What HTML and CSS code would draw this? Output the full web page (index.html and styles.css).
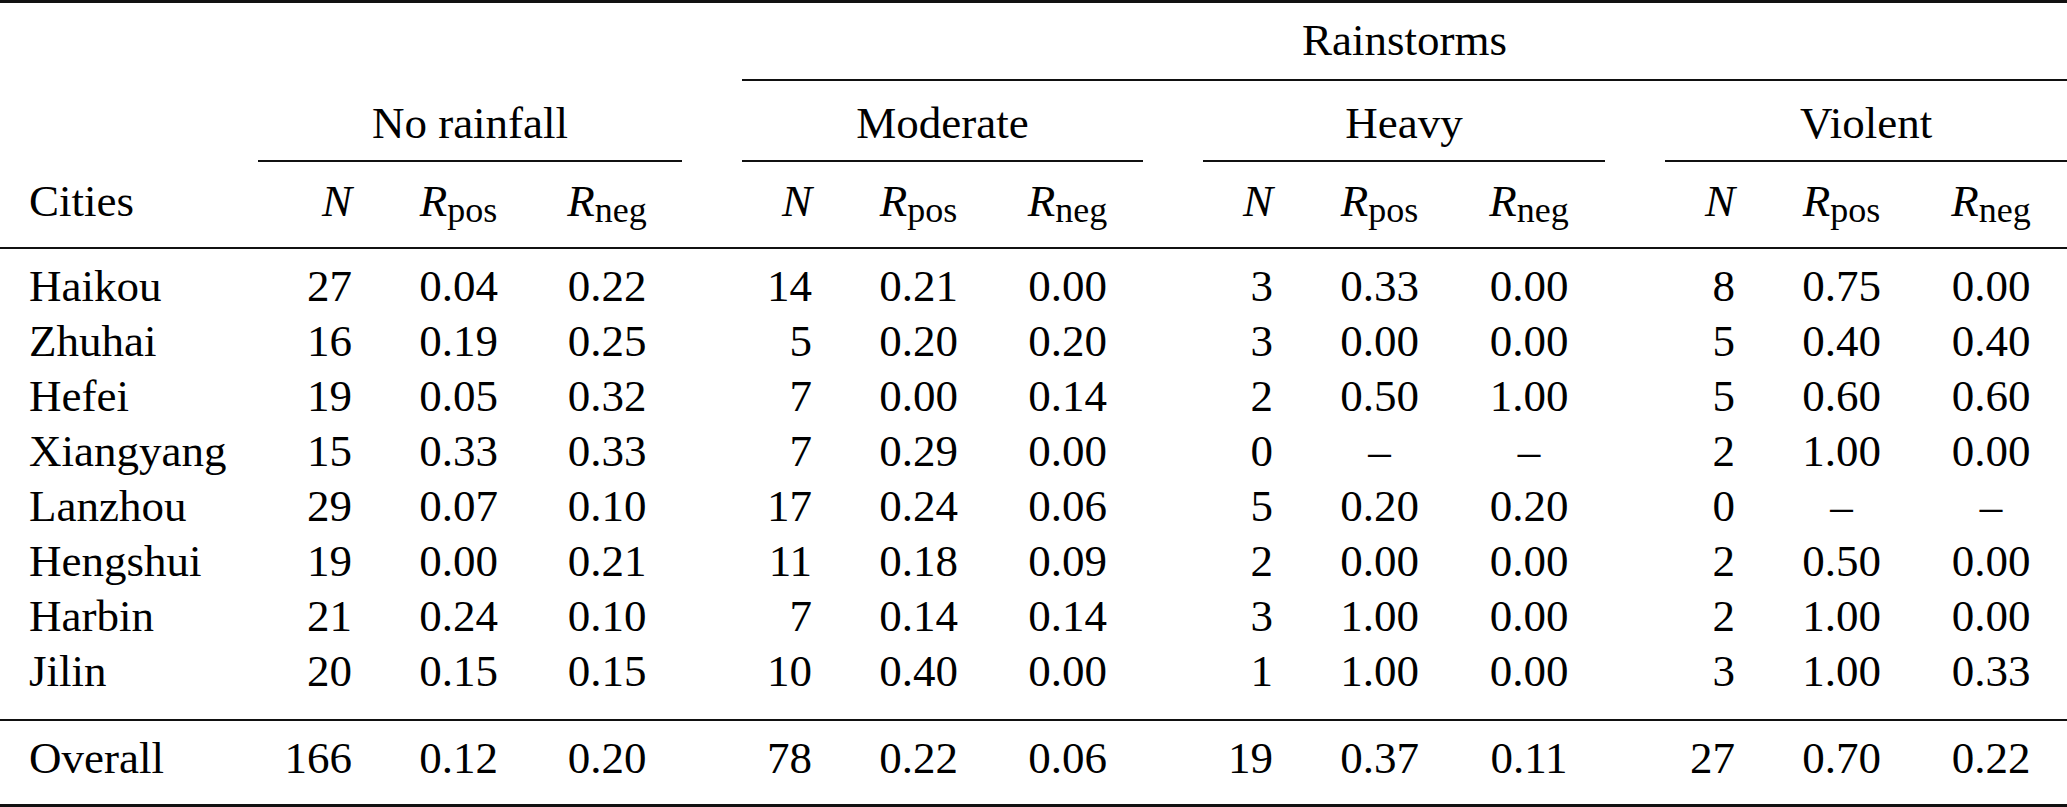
FILE: index.html
```html
<!DOCTYPE html>
<html lang="en">
<head>
<meta charset="utf-8">
<title>Rainstorms table</title>
<link rel="stylesheet" href="styles.css">
</head>
<body>
<table class="tbl">
  <colgroup>
    <col class="c-city">
    <col class="c-n1"><col class="c-r"><col class="c-rl1">
    <col class="c-gap">
    <col class="c-n"><col class="c-r"><col class="c-rl2">
    <col class="c-gap">
    <col class="c-n"><col class="c-r"><col class="c-rl3">
    <col class="c-gap">
    <col class="c-n"><col class="c-r"><col class="c-rl3">
  </colgroup>
  <thead>
    <tr class="r-h1">
      <th></th>
      <th colspan="3"></th>
      <th></th>
      <th colspan="11" class="span-rule">Rainstorms</th>
    </tr>
    <tr class="r-h2">
      <th></th>
      <th colspan="3" class="span-rule">No rainfall</th>
      <th></th>
      <th colspan="3" class="span-rule">Moderate</th>
      <th></th>
      <th colspan="3" class="span-rule">Heavy</th>
      <th></th>
      <th colspan="3" class="span-rule">Violent</th>
    </tr>
    <tr class="r-h3">
      <th class="city">Cities</th>
      <th class="n"><i>N</i></th><th class="r"><i>R</i><sub class="sb">pos</sub></th><th class="r"><i>R</i><sub class="sb">neg</sub></th>
      <th></th>
      <th class="n"><i>N</i></th><th class="r"><i>R</i><sub class="sb">pos</sub></th><th class="r"><i>R</i><sub class="sb">neg</sub></th>
      <th></th>
      <th class="n"><i>N</i></th><th class="r"><i>R</i><sub class="sb">pos</sub></th><th class="r"><i>R</i><sub class="sb">neg</sub></th>
      <th></th>
      <th class="n"><i>N</i></th><th class="r"><i>R</i><sub class="sb">pos</sub></th><th class="r"><i>R</i><sub class="sb">neg</sub></th>
    </tr>
  </thead>
  <tbody>
    <tr class="r-first">
      <td class="city">Haikou</td>
      <td class="n">27</td><td class="r">0.04</td><td class="r">0.22</td><td></td>
      <td class="n">14</td><td class="r">0.21</td><td class="r">0.00</td><td></td>
      <td class="n">3</td><td class="r">0.33</td><td class="r">0.00</td><td></td>
      <td class="n">8</td><td class="r">0.75</td><td class="r">0.00</td>
    </tr>
    <tr>
      <td class="city">Zhuhai</td>
      <td class="n">16</td><td class="r">0.19</td><td class="r">0.25</td><td></td>
      <td class="n">5</td><td class="r">0.20</td><td class="r">0.20</td><td></td>
      <td class="n">3</td><td class="r">0.00</td><td class="r">0.00</td><td></td>
      <td class="n">5</td><td class="r">0.40</td><td class="r">0.40</td>
    </tr>
    <tr>
      <td class="city">Hefei</td>
      <td class="n">19</td><td class="r">0.05</td><td class="r">0.32</td><td></td>
      <td class="n">7</td><td class="r">0.00</td><td class="r">0.14</td><td></td>
      <td class="n">2</td><td class="r">0.50</td><td class="r">1.00</td><td></td>
      <td class="n">5</td><td class="r">0.60</td><td class="r">0.60</td>
    </tr>
    <tr>
      <td class="city">Xiangyang</td>
      <td class="n">15</td><td class="r">0.33</td><td class="r">0.33</td><td></td>
      <td class="n">7</td><td class="r">0.29</td><td class="r">0.00</td><td></td>
      <td class="n">0</td><td class="r">–</td><td class="r">–</td><td></td>
      <td class="n">2</td><td class="r">1.00</td><td class="r">0.00</td>
    </tr>
    <tr>
      <td class="city">Lanzhou</td>
      <td class="n">29</td><td class="r">0.07</td><td class="r">0.10</td><td></td>
      <td class="n">17</td><td class="r">0.24</td><td class="r">0.06</td><td></td>
      <td class="n">5</td><td class="r">0.20</td><td class="r">0.20</td><td></td>
      <td class="n">0</td><td class="r">–</td><td class="r">–</td>
    </tr>
    <tr>
      <td class="city">Hengshui</td>
      <td class="n">19</td><td class="r">0.00</td><td class="r">0.21</td><td></td>
      <td class="n">11</td><td class="r">0.18</td><td class="r">0.09</td><td></td>
      <td class="n">2</td><td class="r">0.00</td><td class="r">0.00</td><td></td>
      <td class="n">2</td><td class="r">0.50</td><td class="r">0.00</td>
    </tr>
    <tr>
      <td class="city">Harbin</td>
      <td class="n">21</td><td class="r">0.24</td><td class="r">0.10</td><td></td>
      <td class="n">7</td><td class="r">0.14</td><td class="r">0.14</td><td></td>
      <td class="n">3</td><td class="r">1.00</td><td class="r">0.00</td><td></td>
      <td class="n">2</td><td class="r">1.00</td><td class="r">0.00</td>
    </tr>
    <tr class="r-last">
      <td class="city">Jilin</td>
      <td class="n">20</td><td class="r">0.15</td><td class="r">0.15</td><td></td>
      <td class="n">10</td><td class="r">0.40</td><td class="r">0.00</td><td></td>
      <td class="n">1</td><td class="r">1.00</td><td class="r">0.00</td><td></td>
      <td class="n">3</td><td class="r">1.00</td><td class="r">0.33</td>
    </tr>
  </tbody>
  <tfoot>
    <tr class="r-total">
      <td class="city">Overall</td>
      <td class="n">166</td><td class="r">0.12</td><td class="r">0.20</td><td></td>
      <td class="n">78</td><td class="r">0.22</td><td class="r">0.06</td><td></td>
      <td class="n">19</td><td class="r">0.37</td><td class="r">0.11</td><td></td>
      <td class="n">27</td><td class="r">0.70</td><td class="r">0.22</td>
    </tr>
  </tfoot>
</table>
</body>
</html>
```

FILE: styles.css
```css
html, body {
  margin: 0;
  padding: 0;
  background: #ffffff;
  font-family: "Liberation Serif", serif;
}

.tbl {
  width: 2067px;
  table-layout: fixed;
  border-collapse: separate;
  border-spacing: 0;
  border-top: 3px solid #111;
  border-bottom: 3px solid #111;
  font-family: "Liberation Serif", serif;
  font-size: 45px;
  line-height: 55px;
  color: #000;
}

.c-city { width: 258px; }
.c-n1 { width: 127px; }
.c-n { width: 103px; }
.c-r { width: 147px; }
.c-rl1 { width: 150px; }
.c-rl2 { width: 151px; }
.c-rl3 { width: 152px; }
.c-gap { width: 60px; }

.tbl th,
.tbl td {
  padding: 0;
  font-family: "Liberation Serif", serif;
  font-weight: normal;
  text-align: center;
  white-space: nowrap;
  vertical-align: top;
}

.tbl i {
  font-style: italic;
}

.sb {
  font-size: 0.8em;
  line-height: 0;
  vertical-align: -0.16em;
}

.tbl .city {
  text-align: left;
  padding-left: 29px;
}

.tbl .n {
  text-align: right;
  padding-right: 33px;
}

.tbl .r {
  text-align: center;
}

/* header row 1: Rainstorms */
.r-h1 th {
  padding-top: 10px;
  padding-bottom: 13px;
}
.r-h1 th.span-rule {
  padding-bottom: 11px;
  border-bottom: 2px solid #111;
}

/* header row 2: group names */
.r-h2 th {
  padding-top: 15px;
  padding-bottom: 11px;
}
.r-h2 th.span-rule {
  padding-bottom: 9px;
  border-bottom: 2px solid #111;
}

/* header row 3: column labels */
.r-h3 th {
  padding-top: 12px;
  padding-bottom: 18px;
  border-bottom: 2px solid #111;
}
.tbl .r-h3 th.n {
  padding-right: 33px;
}
.tbl .r-h3 th.city {
  padding-left: 29px;
}

.r-first td {
  padding-top: 10px;
}

.r-last td {
  padding-bottom: 20px;
  border-bottom: 2px solid #111;
}

.r-total td {
  padding-top: 10px;
  padding-bottom: 18px;
}
```
